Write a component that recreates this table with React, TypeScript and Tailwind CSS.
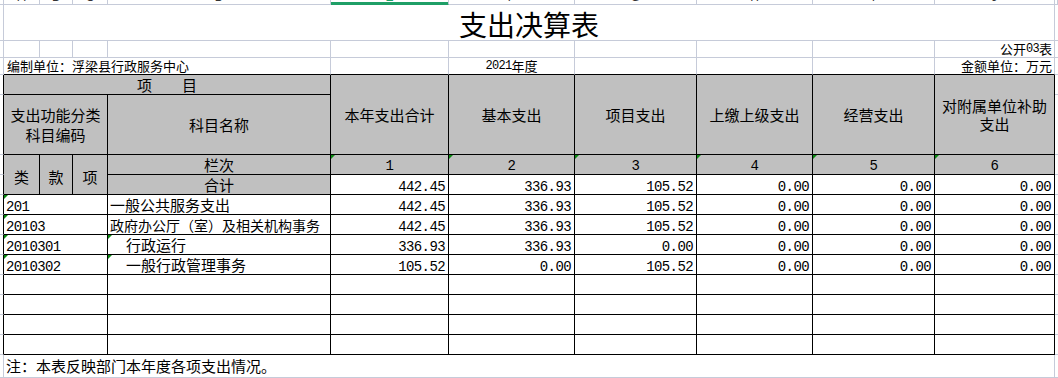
import React from 'react';

// spreadsheet gridline / frame styles
const lt = 'border-r border-b border-[#c6cbd9]';
const bk = 'border-r border-b border-black';
const gray = 'bg-[#c0c0c0]';
const mono = "font-['Liberation_Mono',monospace] text-[14px] leading-[13px] tracking-[-0.6px]";
const monoSm = "font-['Liberation_Mono',monospace] text-[12px] tracking-[-0.7px]";

type Row = {
  code: string;
  name: string;
  vals: string[];
  sub?: boolean;
  small?: boolean;
};

const total = ['442.45', '336.93', '105.52', '0.00', '0.00', '0.00'];

const rows: Row[] = [
  { code: '201', name: '一般公共服务支出', vals: total },
  { code: '20103', name: '政府办公厅（室）及相关机构事务', vals: total, small: true },
  { code: '2010301', name: '行政运行', vals: ['336.93', '336.93', '0.00', '0.00', '0.00', '0.00'], sub: true },
  { code: '2010302', name: '一般行政管理事务', vals: ['105.52', '0.00', '105.52', '0.00', '0.00', '0.00'], sub: true },
];

const heads = ['本年支出合计', '基本支出', '项目支出', '上缴上级支出', '经营支出'];
const letters = ['A', 'B', 'C', 'D', 'E', 'F', 'G', 'H', 'I', 'J', 'K'];

// little green "number stored as text" marker in the cell corner
function Tri() {
  return (
    <span className="absolute left-0 top-0 h-0 w-0 border-t-[4px] border-r-[4px] border-t-[#0b8a12] border-r-transparent" />
  );
}

function Num({ v, head }: { v: string; head?: boolean }) {
  if (head) {
    return (
      <div className={`${bk} ${gray} relative flex items-end justify-center pb-[1px] ${mono}`}>
        <Tri />
        {v}
      </div>
    );
  }
  return <div className={`${bk} flex items-end justify-end pr-[3px] ${mono}`}>{v}</div>;
}

export default function App() {
  return (
    <div className="h-[378px] w-[1058px] overflow-hidden bg-white font-['Noto_Sans_CJK_SC',sans-serif] text-black">
      <div className="grid grid-cols-[4px_36px_33px_35px_223px_118px_126px_122px_116px_122px_120px_3px] grid-rows-[5px_36px_17px_17px_20px_60px_20px_20px_20px_20px_20px_20px_20px_20px_20px_20px_23px]">
        {/* column header strip (cut off) */}
        <div className={lt} />
        {letters.map((l) =>
          l === 'E' ? (
            <div
              key={l}
              className="relative flex items-end justify-center overflow-hidden border-r border-b border-r-[#c6cbd9] border-b-[#1f9f67] font-['Liberation_Sans',sans-serif] text-[12px] leading-[13px] text-[#1f9f67]"
            >
              {l}
              <span className="absolute inset-x-0 bottom-0 h-[2px] bg-[#1f9f67]" />
            </div>
          ) : (
            <div
              key={l}
              className={`${lt} flex items-end justify-center overflow-hidden font-['Liberation_Sans',sans-serif] text-[12px] leading-[13px] text-[#333]`}
            >
              {l}
            </div>
          )
        )}

        {/* title */}
        <div className={lt} />
        <div className={`${lt} col-span-10 flex items-start justify-center pt-[5px] text-[28px] leading-[28px]`}>支出决算表</div>
        <div className="border-b border-[#c6cbd9]" />

        {/* 公开03表 */}
        <div className={lt} />
        {[0, 1, 2, 3, 4, 5, 6, 7, 8].map((i) => (
          <div key={i} className={lt} />
        ))}
        <div className={`${lt} flex items-end justify-end pb-[1px] pr-[2px] text-[13px] leading-[14px]`}>
          公开<span className={monoSm}>03</span>表
        </div>
        <div className="border-b border-[#c6cbd9]" />

        {/* 编制单位 */}
        <div className={lt} />
        <div className="col-span-4 flex items-end border-r border-b border-r-[#c6cbd9] border-b-black pb-[1px] pl-[3px] text-[13px] leading-[14px]">
          编制单位：浮梁县行政服务中心
        </div>
        <div className="border-r border-b border-r-[#c6cbd9] border-b-black" />
        <div className="flex items-end justify-center border-r border-b border-r-[#c6cbd9] border-b-black pb-[1px] text-[13px] leading-[14px]">
          <span className={monoSm}>2021</span>年度
        </div>
        <div className="border-r border-b border-r-[#c6cbd9] border-b-black" />
        <div className="border-r border-b border-r-[#c6cbd9] border-b-black" />
        <div className="border-r border-b border-r-[#c6cbd9] border-b-black" />
        <div className="flex items-end justify-end border-r border-b border-r-[#c6cbd9] border-b-black pb-[1px] pr-[2px] text-[13px] leading-[14px]">
          金额单位：万元
        </div>
        <div className="border-b border-[#c6cbd9]" />

        {/* header: 项目 + money columns */}
        <div className="border-r border-b border-r-black border-b-[#c6cbd9]" />
        <div className={`${bk} ${gray} col-span-4 flex items-center justify-center text-[15px] leading-[15px]`}>项　　目</div>
        {heads.map((h) => (
          <div key={h} className={`${bk} ${gray} row-span-2 flex items-center justify-center text-[15px] leading-[18px]`}>
            {h}
          </div>
        ))}
        <div className={`${bk} ${gray} row-span-2 flex flex-col items-center justify-center text-[15px] leading-[18px]`}>
          <span>对附属单位补助</span>
          <span>支出</span>
        </div>
        <div className="border-b border-[#c6cbd9]" />

        <div className="border-r border-b border-r-black border-b-[#c6cbd9]" />
        <div className={`${bk} ${gray} col-span-3 flex flex-col items-center justify-center text-[15px] leading-[20px]`}>
          <span>支出功能分类</span>
          <span>科目编码</span>
        </div>
        <div className={`${bk} ${gray} flex items-center justify-center text-[15px] leading-[15px]`}>科目名称</div>
        <div className="border-b border-[#c6cbd9]" />

        {/* 栏次 */}
        <div className="border-r border-b border-r-black border-b-[#c6cbd9]" />
        <div className={`${bk} ${gray} row-span-2 flex items-center justify-center pt-[3px] text-[15px] leading-[15px]`}>类</div>
        <div className={`${bk} ${gray} row-span-2 flex items-center justify-center pt-[3px] text-[15px] leading-[15px]`}>款</div>
        <div className={`${bk} ${gray} row-span-2 flex items-center justify-center pt-[3px] text-[15px] leading-[15px]`}>项</div>
        <div className={`${bk} ${gray} flex items-center justify-center text-[15px] leading-[15px]`}>栏次</div>
        {['1', '2', '3', '4', '5', '6'].map((n) => (
          <Num key={n} v={n} head />
        ))}
        <div className="border-b border-[#c6cbd9]" />

        {/* 合计 */}
        <div className="border-r border-b border-r-black border-b-[#c6cbd9]" />
        <div className={`${bk} ${gray} flex items-end justify-center pb-[2px] text-[15px] leading-[15px]`}>合计</div>
        {total.map((v, i) => (
          <Num key={i} v={v} />
        ))}
        <div className="border-b border-[#c6cbd9]" />

        {/* data rows */}
        {rows.map((r) => (
          <React.Fragment key={r.code}>
            <div className="border-r border-b border-r-black border-b-[#c6cbd9]" />
            <div className={`${bk} relative col-span-3 flex items-end pl-[2px] ${mono}`}>
              <Tri />
              {r.code}
            </div>
            <div
              className={`${bk} relative flex items-end whitespace-nowrap pb-[2px] ${r.sub ? 'pl-[18px]' : 'pl-[2px]'} ${
                r.small ? 'text-[14px] leading-[14px]' : 'text-[15px] leading-[15px]'
              }`}
            >
              {r.sub && <Tri />}
              {r.name}
            </div>
            {r.vals.map((v, i) => (
              <Num key={i} v={v} />
            ))}
            <div className="border-b border-[#c6cbd9]" />
          </React.Fragment>
        ))}

        {/* empty rows */}
        {[0, 1, 2, 3].map((k) => (
          <React.Fragment key={k}>
            <div className="border-r border-b border-r-black border-b-[#c6cbd9]" />
            <div className={`${bk} col-span-3`} />
            <div className={bk} />
            <div className={bk} />
            <div className={bk} />
            <div className={bk} />
            <div className={bk} />
            <div className={bk} />
            <div className={bk} />
            <div className="border-b border-[#c6cbd9]" />
          </React.Fragment>
        ))}

        {/* note */}
        <div className={lt} />
        <div className={`${lt} col-span-10 flex items-center pb-[2px] pl-[2px] text-[15px] leading-[15px]`}>
          注：本表反映部门本年度各项支出情况。
        </div>
        <div className="border-b border-[#c6cbd9]" />
      </div>
    </div>
  );
}
